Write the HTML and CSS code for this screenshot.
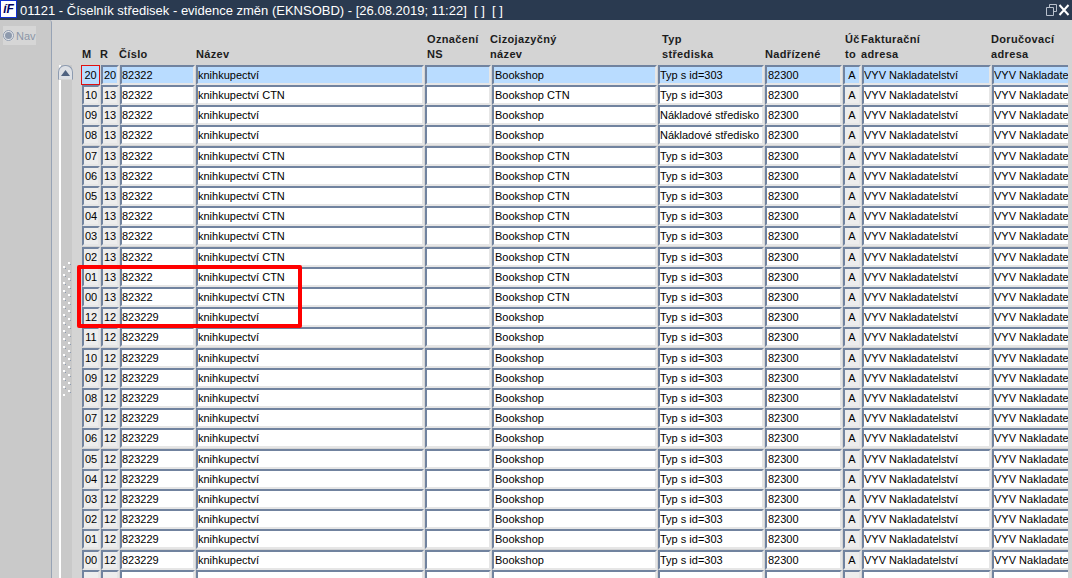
FILE: index.html
```html
<!DOCTYPE html>
<html lang="cs">
<head>
<meta charset="utf-8">
<title>01121</title>
<link rel="stylesheet" href="styles.css">
</head>
<body>
<div class="titlebar">
  <div class="logo">íF</div>
  <div class="title">01121 - Číselník středisek - evidence změn (EKNSOBD) - [26.08.2019; 11:22]&nbsp; [ ]&nbsp; [ ]</div>
  <svg class="winicons" width="26" height="14" viewBox="0 0 26 14"><path d="M1.5 4.5h7v8h-7zM4.5 4V1.5h7v7H9" fill="none" stroke="#b8c0cc"/><path d="M14.5 2l9 10M23.5 2l-9 10" stroke="#fff" stroke-width="2" fill="none"/></svg>
</div>
<div class="content">
  <aside class="nav"><div class="navitem"><span class="radio"></span><span>Nav</span></div></aside>
  <div class="scroller">
    <div class="track">
      <div class="sbtn"><svg width="9" height="6" viewBox="0 0 9 6"><path d="M4.5 0L9 6H0z" fill="#4f6280"/></svg></div>
      <svg class="grip" width="10" height="134"><defs><pattern id="g" width="10" height="8" patternUnits="userSpaceOnUse"><rect x="6" y="0" width="2" height="2" fill="#fff"/><rect x="8" y="2" width="1" height="1" fill="#8d9bb0"/><rect x="1" y="4" width="2" height="2" fill="#fff"/><rect x="3" y="6" width="1" height="1" fill="#8d9bb0"/></pattern></defs><rect width="10" height="134" fill="url(#g)"/></svg>
    </div>
  </div>
  <main class="form">
    <div class="cols head">
      <div>M</div><div class="hr">R</div><div class="hc">Číslo</div><div class="hn">Název</div><div class="ho">Označení<br>NS</div><div class="hz">Cizojazyčný<br>název</div><div class="ht">Typ<br>střediska</div><div class="hs">Nadřízené</div><div class="hu">Úč<br>to</div><div class="hf">Fakturační<br>adresa</div><div class="hd">Doručovací<br>adresa</div>
    </div>
    <div class="cols row sel"><div class="f g m cur">20</div><div class="f g m">20</div><div class="f">82322</div><div class="f">knihkupectví</div><div class="f"></div><div class="f b">Bookshop</div><div class="f">Typ s id=303</div><div class="f b">82300</div><div class="f g m">A</div><div class="f">VYV Nakladatelství</div><div class="f">VYV Nakladatelství</div></div>
    <div class="cols row"><div class="f g m">10</div><div class="f g m">13</div><div class="f">82322</div><div class="f">knihkupectví CTN</div><div class="f"></div><div class="f b">Bookshop CTN</div><div class="f">Typ s id=303</div><div class="f b">82300</div><div class="f g m">A</div><div class="f">VYV Nakladatelství</div><div class="f">VYV Nakladatelství</div></div>
    <div class="cols row"><div class="f g m">09</div><div class="f g m">13</div><div class="f">82322</div><div class="f">knihkupectví</div><div class="f"></div><div class="f b">Bookshop</div><div class="f">Nákladové středisko</div><div class="f b">82300</div><div class="f g m">A</div><div class="f">VYV Nakladatelství</div><div class="f">VYV Nakladatelství</div></div>
    <div class="cols row"><div class="f g m">08</div><div class="f g m">13</div><div class="f">82322</div><div class="f">knihkupectví</div><div class="f"></div><div class="f b">Bookshop</div><div class="f">Nákladové středisko</div><div class="f b">82300</div><div class="f g m">A</div><div class="f">VYV Nakladatelství</div><div class="f">VYV Nakladatelství</div></div>
    <div class="cols row"><div class="f g m">07</div><div class="f g m">13</div><div class="f">82322</div><div class="f">knihkupectví CTN</div><div class="f"></div><div class="f b">Bookshop CTN</div><div class="f">Typ s id=303</div><div class="f b">82300</div><div class="f g m">A</div><div class="f">VYV Nakladatelství</div><div class="f">VYV Nakladatelství</div></div>
    <div class="cols row"><div class="f g m">06</div><div class="f g m">13</div><div class="f">82322</div><div class="f">knihkupectví CTN</div><div class="f"></div><div class="f b">Bookshop CTN</div><div class="f">Typ s id=303</div><div class="f b">82300</div><div class="f g m">A</div><div class="f">VYV Nakladatelství</div><div class="f">VYV Nakladatelství</div></div>
    <div class="cols row"><div class="f g m">05</div><div class="f g m">13</div><div class="f">82322</div><div class="f">knihkupectví CTN</div><div class="f"></div><div class="f b">Bookshop CTN</div><div class="f">Typ s id=303</div><div class="f b">82300</div><div class="f g m">A</div><div class="f">VYV Nakladatelství</div><div class="f">VYV Nakladatelství</div></div>
    <div class="cols row"><div class="f g m">04</div><div class="f g m">13</div><div class="f">82322</div><div class="f">knihkupectví CTN</div><div class="f"></div><div class="f b">Bookshop CTN</div><div class="f">Typ s id=303</div><div class="f b">82300</div><div class="f g m">A</div><div class="f">VYV Nakladatelství</div><div class="f">VYV Nakladatelství</div></div>
    <div class="cols row"><div class="f g m">03</div><div class="f g m">13</div><div class="f">82322</div><div class="f">knihkupectví CTN</div><div class="f"></div><div class="f b">Bookshop CTN</div><div class="f">Typ s id=303</div><div class="f b">82300</div><div class="f g m">A</div><div class="f">VYV Nakladatelství</div><div class="f">VYV Nakladatelství</div></div>
    <div class="cols row"><div class="f g m">02</div><div class="f g m">13</div><div class="f">82322</div><div class="f">knihkupectví CTN</div><div class="f"></div><div class="f b">Bookshop CTN</div><div class="f">Typ s id=303</div><div class="f b">82300</div><div class="f g m">A</div><div class="f">VYV Nakladatelství</div><div class="f">VYV Nakladatelství</div></div>
    <div class="cols row"><div class="f g m">01</div><div class="f g m">13</div><div class="f">82322</div><div class="f">knihkupectví CTN</div><div class="f"></div><div class="f b">Bookshop CTN</div><div class="f">Typ s id=303</div><div class="f b">82300</div><div class="f g m">A</div><div class="f">VYV Nakladatelství</div><div class="f">VYV Nakladatelství</div></div>
    <div class="cols row"><div class="f g m">00</div><div class="f g m">13</div><div class="f">82322</div><div class="f">knihkupectví CTN</div><div class="f"></div><div class="f b">Bookshop CTN</div><div class="f">Typ s id=303</div><div class="f b">82300</div><div class="f g m">A</div><div class="f">VYV Nakladatelství</div><div class="f">VYV Nakladatelství</div></div>
    <div class="cols row"><div class="f g m">12</div><div class="f g m">12</div><div class="f">823229</div><div class="f">knihkupectví</div><div class="f"></div><div class="f b">Bookshop</div><div class="f">Typ s id=303</div><div class="f b">82300</div><div class="f g m">A</div><div class="f">VYV Nakladatelství</div><div class="f">VYV Nakladatelství</div></div>
    <div class="cols row"><div class="f g m">11</div><div class="f g m">12</div><div class="f">823229</div><div class="f">knihkupectví</div><div class="f"></div><div class="f b">Bookshop</div><div class="f">Typ s id=303</div><div class="f b">82300</div><div class="f g m">A</div><div class="f">VYV Nakladatelství</div><div class="f">VYV Nakladatelství</div></div>
    <div class="cols row"><div class="f g m">10</div><div class="f g m">12</div><div class="f">823229</div><div class="f">knihkupectví</div><div class="f"></div><div class="f b">Bookshop</div><div class="f">Typ s id=303</div><div class="f b">82300</div><div class="f g m">A</div><div class="f">VYV Nakladatelství</div><div class="f">VYV Nakladatelství</div></div>
    <div class="cols row"><div class="f g m">09</div><div class="f g m">12</div><div class="f">823229</div><div class="f">knihkupectví</div><div class="f"></div><div class="f b">Bookshop</div><div class="f">Typ s id=303</div><div class="f b">82300</div><div class="f g m">A</div><div class="f">VYV Nakladatelství</div><div class="f">VYV Nakladatelství</div></div>
    <div class="cols row"><div class="f g m">08</div><div class="f g m">12</div><div class="f">823229</div><div class="f">knihkupectví</div><div class="f"></div><div class="f b">Bookshop</div><div class="f">Typ s id=303</div><div class="f b">82300</div><div class="f g m">A</div><div class="f">VYV Nakladatelství</div><div class="f">VYV Nakladatelství</div></div>
    <div class="cols row"><div class="f g m">07</div><div class="f g m">12</div><div class="f">823229</div><div class="f">knihkupectví</div><div class="f"></div><div class="f b">Bookshop</div><div class="f">Typ s id=303</div><div class="f b">82300</div><div class="f g m">A</div><div class="f">VYV Nakladatelství</div><div class="f">VYV Nakladatelství</div></div>
    <div class="cols row"><div class="f g m">06</div><div class="f g m">12</div><div class="f">823229</div><div class="f">knihkupectví</div><div class="f"></div><div class="f b">Bookshop</div><div class="f">Typ s id=303</div><div class="f b">82300</div><div class="f g m">A</div><div class="f">VYV Nakladatelství</div><div class="f">VYV Nakladatelství</div></div>
    <div class="cols row"><div class="f g m">05</div><div class="f g m">12</div><div class="f">823229</div><div class="f">knihkupectví</div><div class="f"></div><div class="f b">Bookshop</div><div class="f">Typ s id=303</div><div class="f b">82300</div><div class="f g m">A</div><div class="f">VYV Nakladatelství</div><div class="f">VYV Nakladatelství</div></div>
    <div class="cols row"><div class="f g m">04</div><div class="f g m">12</div><div class="f">823229</div><div class="f">knihkupectví</div><div class="f"></div><div class="f b">Bookshop</div><div class="f">Typ s id=303</div><div class="f b">82300</div><div class="f g m">A</div><div class="f">VYV Nakladatelství</div><div class="f">VYV Nakladatelství</div></div>
    <div class="cols row"><div class="f g m">03</div><div class="f g m">12</div><div class="f">823229</div><div class="f">knihkupectví</div><div class="f"></div><div class="f b">Bookshop</div><div class="f">Typ s id=303</div><div class="f b">82300</div><div class="f g m">A</div><div class="f">VYV Nakladatelství</div><div class="f">VYV Nakladatelství</div></div>
    <div class="cols row"><div class="f g m">02</div><div class="f g m">12</div><div class="f">823229</div><div class="f">knihkupectví</div><div class="f"></div><div class="f b">Bookshop</div><div class="f">Typ s id=303</div><div class="f b">82300</div><div class="f g m">A</div><div class="f">VYV Nakladatelství</div><div class="f">VYV Nakladatelství</div></div>
    <div class="cols row"><div class="f g m">01</div><div class="f g m">12</div><div class="f">823229</div><div class="f">knihkupectví</div><div class="f"></div><div class="f b">Bookshop</div><div class="f">Typ s id=303</div><div class="f b">82300</div><div class="f g m">A</div><div class="f">VYV Nakladatelství</div><div class="f">VYV Nakladatelství</div></div>
    <div class="cols row"><div class="f g m">00</div><div class="f g m">12</div><div class="f">823229</div><div class="f">knihkupectví</div><div class="f"></div><div class="f b">Bookshop</div><div class="f">Typ s id=303</div><div class="f b">82300</div><div class="f g m">A</div><div class="f">VYV Nakladatelství</div><div class="f">VYV Nakladatelství</div></div>
    <div class="cols row"><div class="f g m"></div><div class="f g m"></div><div class="f"></div><div class="f"></div><div class="f"></div><div class="f"></div><div class="f"></div><div class="f"></div><div class="f g m"></div><div class="f"></div><div class="f"></div></div>
  </main>
</div>
<div class="mark"></div>
</body>
</html>
```
FILE: styles.css
```css
* { box-sizing: border-box; }
html, body { margin: 0; height: 578px; overflow: hidden; }
body {
  position: relative;
  width: 1072px;
  background: #d4d4d4;
  font-family: "Liberation Sans", Arial, sans-serif;
  font-size: 11px;
  color: #000;
  display: flex;
  flex-direction: column;
}
.titlebar {
  height: 20px;
  flex: none;
  background: #2a3a50;
  color: #fff;
  display: flex;
  align-items: center;
}
.logo {
  width: 17px;
  height: 18px;
  margin-bottom: 2px;
  background: #fff;
  border: 1px solid #1030d0;
  color: #000060;
  font: italic bold 12px/16px "Liberation Sans", sans-serif;
  text-align: center;
  overflow: hidden;
}
.title { margin-left: 3px; font-size: 13px; white-space: pre; flex: 1; }
.winicons { margin-right: 1px; }
.content { flex: 1; display: flex; min-height: 0; }
.nav {
  width: 52px;
  flex: none;
  background: #c9c9c9;
  border-right: 1px solid #97a3b5;
  border-top-right-radius: 3px;
  padding: 6px 16px 0 3px;
}
.navitem {
  width: 33px;
  height: 19px;
  background: #d6d6d6;
  color: #8c97a8;
  font-size: 11px;
  display: flex;
  align-items: center;
  gap: 2px;
  margin-right: -16px;
}
.radio {
  width: 11px;
  height: 11px;
  flex: none;
  border-radius: 50%;
  background: #8e9aad;
  border: 2px solid #e4e6ea;
  outline: 1px solid #8e9aad;
  outline-offset: -1px;
}
.scroller { width: 29px; flex: none; padding: 45px 0 0 6px; }
.track {
  height: 100%;
  display: flex;
  flex-direction: column;
  background: #c9c9c9;
  border-left: 2px solid #fff;
  margin-left: 1px;
  width: 13px;
}
.sbtn {
  height: 15px;
  width: 15px;
  margin-left: -3px;
  flex: none;
  background: #dde0e5;
  border: 1px solid #8d9bb0;
  border-bottom-color: #d4d4d4;
  border-radius: 7px 7px 0 0;
  display: flex;
  align-items: center;
  justify-content: center;
}
.grip { margin: 182px 0 0 1px; flex: none; }
.form { width: 987px; flex: none; overflow: hidden; padding-left: 1px; }
.cols {
  display: grid;
  grid-template-columns: 18px 18px 75px 228px 66px 165px 106px 77px 18px 129px 130px;
  column-gap: 1px;
}
.head {
  height: 44.75px;
  align-items: end;
  font-weight: bold;
  line-height: 15px;
  letter-spacing: .35px;
  color: #1c1c1c;
  padding-bottom: 3px;
  white-space: nowrap;
}
.hr { margin-left: -1px; }
.hc { margin-left: -1px; }
.ho { margin-left: 2px; }
.hz { margin-left: -2px; }
.ht { margin-left: 4px; }
.hu { margin-left: 2px; }
.hf { margin-left: -1px; }
.hd { margin-left: -1px; }
.row { height: 20.21px; }
.f {
  height: 20px;
  border: 2px solid;
  border-color: #71839f #e6e6e6 #e6e6e6 #71839f;
  background: #fff;
  line-height: 16px;
  white-space: nowrap;
  overflow: hidden;
}
.b { padding-left: 1px; }
.g { background: #ededed; }
.m { text-align: center; }
.sel .f { background: #b9dcff; }
.sel .cur { border: 1px solid #e01010; margin-left: -1px; width: 19px; line-height: 18px; }
.mark {
  position: absolute;
  left: 77px;
  top: 265px;
  width: 225px;
  height: 63px;
  border: 4px solid #f00;
  border-radius: 2px;
}
```
